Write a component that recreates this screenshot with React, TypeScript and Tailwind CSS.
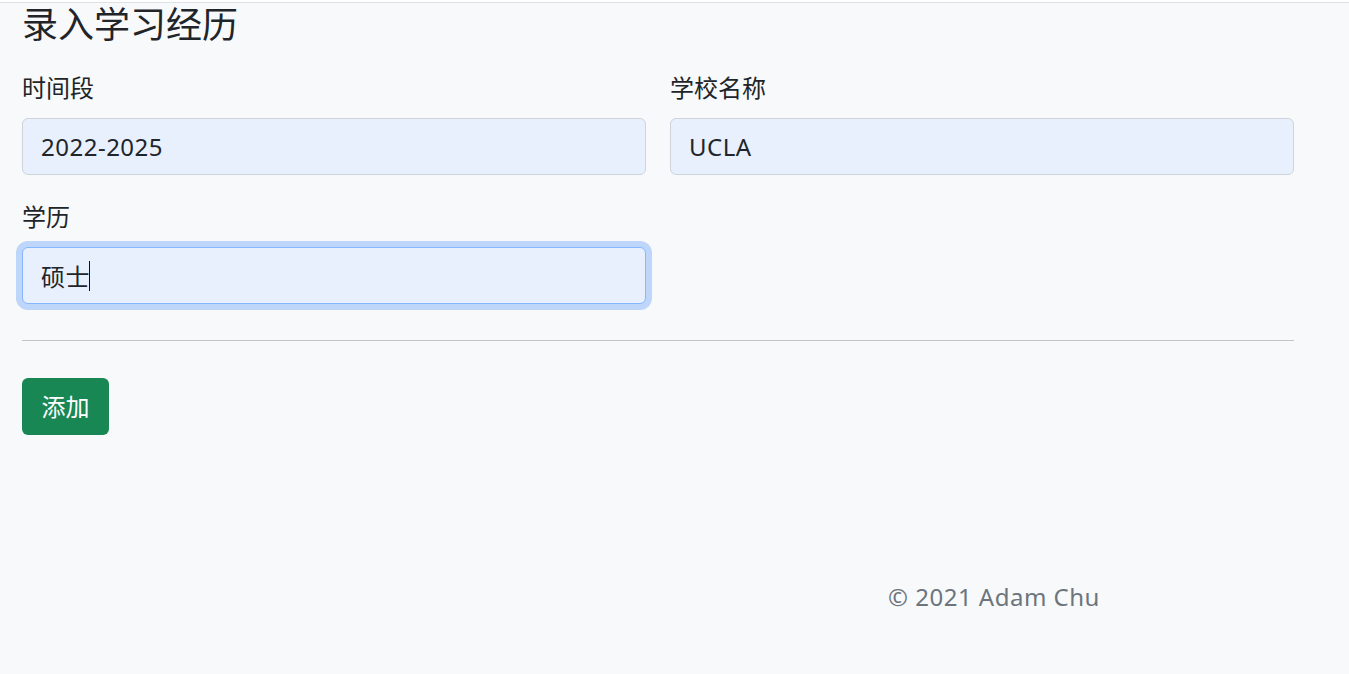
import React from 'react';

const inputBase =
    'w-full h-[57px] rounded-[6px] border bg-[#e8f0fe] px-[18px] text-[24px] tracking-[0.5px] text-[#212529] outline-none';

function Field({ label, value, focused }: { label: string; value: string; focused?: boolean }) {
    return (
        <div className="flex flex-col">
            <label className="text-[24px] leading-[36px] text-[#212529] mb-[12px]">{label}</label>
            <div className="relative">
                <input
                    readOnly
                    defaultValue={value}
                    className={
                        focused
                            ? inputBase + ' border-[#86b7fe] ring-[6px] ring-[#0d6efd]/25 caret-transparent'
                            : inputBase + ' border-[#ced4da]'
                    }
                />
                {focused && <span className="absolute left-[67px] top-[14px] w-px h-[30px] bg-[#111]" />}
            </div>
        </div>
    );
}

export default function App() {
    return (
        <div className="min-h-screen bg-white pt-[2px] font-['Noto_Sans','Noto_Sans_CJK_SC',sans-serif]">
            <div className="min-h-[672px] bg-[#f8f9fa] border-t border-[#dee2e6]">
                <div className="ml-[22px] w-[1272px]">
                    <h4 className="text-[36px] leading-[43px] font-normal text-[#212529]">录入学习经历</h4>

                    <div className="grid grid-cols-2 gap-x-6 gap-y-6 mt-[24px]">
                        <Field label="时间段" value="2022-2025" />
                        <Field label="学校名称" value="UCLA" />
                        <Field label="学历" value="硕士" focused />
                    </div>

                    <div className="mt-[36px] h-px bg-[#c3c4c6]" />

                    <button className="mt-[37px] w-[87px] h-[57px] rounded-[6px] bg-[#198754] text-white text-[24px]">
                        添加
                    </button>
                </div>

                <footer className="mt-[144px] pl-[888px] text-[24px] leading-[36px] tracking-[0.5px] text-[#6c757d]">
                    © 2021 Adam Chu
                </footer>
            </div>
        </div>
    );
}
